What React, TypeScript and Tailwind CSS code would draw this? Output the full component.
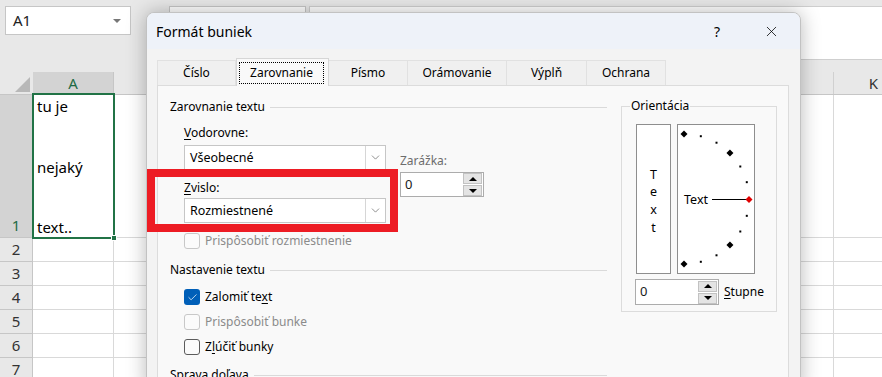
import { X, ChevronDown, Check } from 'lucide-react'

const cols = ['B', 'C', 'D', 'E', 'F', 'G', 'H', 'I', 'J', 'K']
const rows = [2, 3, 4, 5, 6, 7, 8]

const tabs = [
  { name: 'Číslo', w: 'w-[79px] border-l' },
  { name: 'Zarovnanie', w: 'w-[93px]', active: true },
  { name: 'Písmo', w: 'w-[79px]' },
  { name: 'Orámovanie', w: 'w-[99px]' },
  { name: 'Výplň', w: 'w-[80px]' },
  { name: 'Ochrana', w: 'w-[79px]' },
]

function GroupHead({ label }: { label: string }) {
  return (
    <div className="flex items-center h-[16px] gap-[5px]">
      <span className="leading-[16px]">{label}</span>
      <span className="flex-1 h-px bg-[#dadada]" />
    </div>
  )
}

function Select({ value }: { value: string }) {
  return (
    <div className="flex h-[25px] w-[202px] border border-[#c6c6c6] bg-white">
      <span className="flex-1 pl-[5px] leading-[23px] text-[12.5px]">{value}</span>
      <span className="w-[20px] border-l border-[#d6d6d6] flex items-center justify-center">
        <ChevronDown size={13} strokeWidth={1.2} className="text-[#555]" />
      </span>
    </div>
  )
}

function Spin({ className }: { className: string }) {
  return (
    <div className={`flex items-center border border-[#acacac] bg-white ${className}`}>
      <span className="flex-1 pl-[4px] text-[13px] text-[#1a1a1a]">0</span>
      <div className="flex flex-col gap-[1px] mr-px">
        <div className="w-[19px] h-[11px] bg-[#e4e4e4] border border-[#c2c2c2] flex items-center justify-center">
          <span className="w-0 h-0 border-x-[4px] border-x-transparent border-b-[4px] border-b-black" />
        </div>
        <div className="w-[19px] h-[11px] bg-[#e4e4e4] border border-[#c2c2c2] flex items-center justify-center">
          <span className="w-0 h-0 border-x-[4px] border-x-transparent border-t-[4px] border-t-black" />
        </div>
      </div>
    </div>
  )
}

function CheckRow({ state, className, children }: { state: 'on' | 'off' | 'disabled'; className: string; children: React.ReactNode }) {
  return (
    <div className={`flex items-center h-[16px] gap-[5px] ${className}`}>
      {state === 'on' && (
        <span className="w-[16px] h-[16px] rounded-[3px] bg-[#005fb8] flex items-center justify-center">
          <Check size={11} strokeWidth={1.6} className="text-white" />
        </span>
      )}
      {state === 'off' && <span className="w-[16px] h-[16px] rounded-[3px] border border-[#5c5c5c] bg-[#fbfbfb]" />}
      {state === 'disabled' && <span className="w-[16px] h-[16px] rounded-[3px] border border-[#c8c8c8] bg-[#fbfbfb]" />}
      <span className={state === 'disabled' ? 'text-[#8b8b8b]' : 'text-black'}>{children}</span>
    </div>
  )
}

function Dial() {
  const cx = 6
  const cy = 74
  const r = 65
  const big = [90, 45, -45, -90]
  const small = [75, 60, 30, 15, -15, -30, -60, -75]
  const pt = (a: number) => [cx + r * Math.cos((a * Math.PI) / 180), cy - r * Math.sin((a * Math.PI) / 180)]
  const diamond = (x: number, y: number, s: number) => `${x},${y - s} ${x + s},${y} ${x},${y + s} ${x - s},${y}`
  return (
    <svg width="76" height="148" viewBox="0 0 76 148">
      {big.map((a) => {
        const [x, y] = pt(a)
        return <polygon key={a} points={diamond(x, y, 3.5)} fill="#000" />
      })}
      {small.map((a) => {
        const [x, y] = pt(a)
        return <rect key={a} x={x - 1} y={y - 1} width="2" height="2" fill="#000" />
      })}
      <line x1="34" y1="74.5" x2="70" y2="74.5" stroke="#000" strokeWidth="1" />
      <polygon points={diamond(71, 74.5, 3.5)} fill="#e00000" />
      <text x="6" y="79" fontSize="12.5" fontFamily="'Noto Sans', sans-serif" fill="#000">Text</text>
    </svg>
  )
}

export default function App() {
  return (
    <div className="relative w-[882px] h-[377px] overflow-hidden bg-white font-['Noto_Sans',sans-serif] text-black">
      {/* ribbon / formula bar */}
      <div className="h-[72px] bg-[#e8e8e8] flex items-start pt-[6px]">
        <div className="ml-[5px] w-[126px] h-[29px] shrink-0 border border-[#c6c6c6] bg-white flex items-center justify-between pl-[7px] pr-[9px]">
          <span className="text-[15px] text-[#222]">A1</span>
          <span className="w-0 h-0 border-x-[4px] border-x-transparent border-t-[4px] border-t-[#777]" />
        </div>
        <div className="ml-[38px] w-[137px] h-[29px] shrink-0 border border-[#c6c6c6] bg-white" />
        <div className="ml-[3px] flex-1 h-[54px] border border-r-0 border-[#cfcfcf] bg-white" />
      </div>

      {/* column headers */}
      <div className="flex h-[23px] bg-[#e8e8e8] border-b border-[#c6c6c6]">
        <div className="w-[33px] shrink-0 flex items-end justify-end pr-[3px] pb-[2px]">
          <span className="w-0 h-0 border-l-[15px] border-l-transparent border-b-[15px] border-b-[#b8b8b8]" />
        </div>
        <div className="w-[81px] shrink-0 bg-[#d3d3d3] border-r border-[#c6c6c6] flex items-center justify-center text-[15px] text-[#1e6b45]">A</div>
        {cols.map((c) => (
          <div key={c} className="w-[80px] shrink-0 border-r border-[#d0d0d0] flex items-center justify-center text-[15px] text-[#333]">
            {c}
          </div>
        ))}
      </div>

      {/* row 1 */}
      <div className="flex h-[143px]">
        <div className="w-[33px] shrink-0 bg-[#d3d3d3] border-b border-r border-[#c6c6c6] flex items-end justify-center pb-[1px] text-[15px] text-[#1e6b45]">1</div>
        <div className="relative w-[81px] shrink-0 border-b border-r border-[#d9d9d9] flex flex-col justify-between pl-[4px] pt-[1px] text-[15px] leading-[20px]">
          <span>tu je</span>
          <span>nejaký</span>
          <span>text..</span>
          <div className="absolute -left-px -top-[2px] w-[83px] h-[146px] border-2 border-[#217346]" />
          <div className="absolute -right-[4px] -bottom-[4px] w-[6px] h-[6px] bg-[#217346] border border-white" />
        </div>
        {cols.map((c) => (
          <div key={c} className="w-[80px] shrink-0 border-b border-r border-[#d9d9d9]" />
        ))}
      </div>

      {rows.map((r) => (
        <div key={r} className="flex h-[24px]">
          <div className="w-[33px] shrink-0 bg-[#e8e8e8] border-b border-r border-[#c6c6c6] flex items-center justify-center text-[15px] text-[#333]">{r}</div>
          <div className="w-[81px] shrink-0 border-b border-r border-[#d9d9d9]" />
          {cols.map((c) => (
            <div key={c} className="w-[80px] shrink-0 border-b border-r border-[#d9d9d9]" />
          ))}
        </div>
      ))}

      {/* Format cells dialog */}
      <div className="absolute left-[146px] top-[12px] w-[655px] h-[380px] rounded-t-[8px] border border-[#c2c2c2] bg-[#f3f3f3] shadow-[0_0_20px_rgba(0,0,0,0.28)] flex flex-col overflow-hidden text-[12px]">
        <div className="h-[36px] shrink-0 bg-[#eef2f9] flex items-center pl-[9px] pr-[6px]">
          <span className="flex-1 text-[14px]">Formát buniek</span>
          <span className="w-[46px] mr-[8px] text-center text-[14px]">?</span>
          <span className="w-[46px] flex justify-center">
            <X size={17} strokeWidth={1.1} />
          </span>
        </div>

        <div className="flex-1 flex flex-col pt-[9px] pl-[10px] pr-[11px]">
          <div className="flex items-end h-[28px] relative z-10 -mb-px">
            {tabs.map((t) =>
              t.active ? (
                <div key={t.name} className={`${t.w} h-[28px] bg-[#f9f9f9] border-x border-t border-[#d6d6d6] pl-[2px] pr-[4px] pt-[3px] pb-[2px]`}>
                  <div className="h-full border border-dotted border-black flex items-center justify-center">{t.name}</div>
                </div>
              ) : (
                <div key={t.name} className={`${t.w} h-[25px] mb-px bg-[#f0f0f0] border-t border-r border-[#e1e1e1] flex items-center justify-center`}>
                  {t.name}
                </div>
              )
            )}
          </div>

          <div className="flex-1 border border-[#dcdcdc] bg-[#f9f9f9] flex items-start pl-[12px] pt-[13px]">
            <div className="w-[437px] flex flex-col">
              <GroupHead label="Zarovnanie textu" />
              <div className="pl-[14px] flex flex-col">
                <div className="mt-[10px] h-[16px] leading-[16px]">
                  <span className="underline underline-offset-2">V</span>odorovne:
                </div>
                <div className="mt-[4px] flex">
                  <div className="flex flex-col w-[202px]">
                    <Select value="Všeobecné" />
                    <div className="mt-[10px] h-[16px] leading-[16px]">
                      <span className="underline underline-offset-2">Z</span>vislo:
                    </div>
                    <div className="mt-[2px]">
                      <Select value="Rozmiestnené" />
                    </div>
                  </div>
                  <div className="ml-[14px] flex flex-col">
                    <div className="mt-[8px] h-[16px] leading-[16px] text-[#6d6d6d]">Zarážka:</div>
                    <Spin className="mt-[3px] w-[84px] h-[25px]" />
                  </div>
                </div>
                <CheckRow state="disabled" className="mt-[10px]">Prispôsobiť rozmiestnenie</CheckRow>
              </div>

              <div className="mt-[13px]">
                <GroupHead label="Nastavenie textu" />
              </div>
              <div className="pl-[14px] flex flex-col">
                <CheckRow state="on" className="mt-[11px]">
                  Zalomiť te<span className="underline underline-offset-2">x</span>t
                </CheckRow>
                <CheckRow state="disabled" className="mt-[9px]">Prispôsobiť bunke</CheckRow>
                <CheckRow state="off" className="mt-[9px]">
                  Z<span className="underline underline-offset-2">l</span>účiť bunky
                </CheckRow>
              </div>
              <div className="mt-[12px]">
                <GroupHead label="Sprava doľava" />
              </div>
            </div>

            <fieldset className="ml-[14px] -mt-px w-[156px] border border-[#dcdcdc]">
              <legend className="ml-[8px] px-px h-[16px] leading-[16px]">Orientácia</legend>
              <div className="pl-[14px] pt-[10px] pb-[6px]">
                <div className="flex gap-[6px]">
                  <div className="w-[35px] h-[150px] border border-[#8e8e8e] bg-white flex flex-col items-center justify-center pt-[4px] text-[12.5px] leading-[17.7px]">
                    <span>T</span>
                    <span>e</span>
                    <span>x</span>
                    <span>t</span>
                  </div>
                  <div className="w-[78px] h-[150px] border border-[#8e8e8e] bg-white">
                    <Dial />
                  </div>
                </div>
                <div className="mt-[5px] flex items-center">
                  <Spin className="-ml-px w-[84px] h-[26px]" />
                  <span className="ml-[5px]">
                    <span className="underline underline-offset-2">S</span>tupne
                  </span>
                </div>
              </div>
            </fieldset>
          </div>
        </div>
      </div>

      {/* annotation */}
      <div className="absolute left-[147px] top-[169px] w-[251px] h-[63px] border-[8px] border-[#ed1c24]" />
    </div>
  )
}
